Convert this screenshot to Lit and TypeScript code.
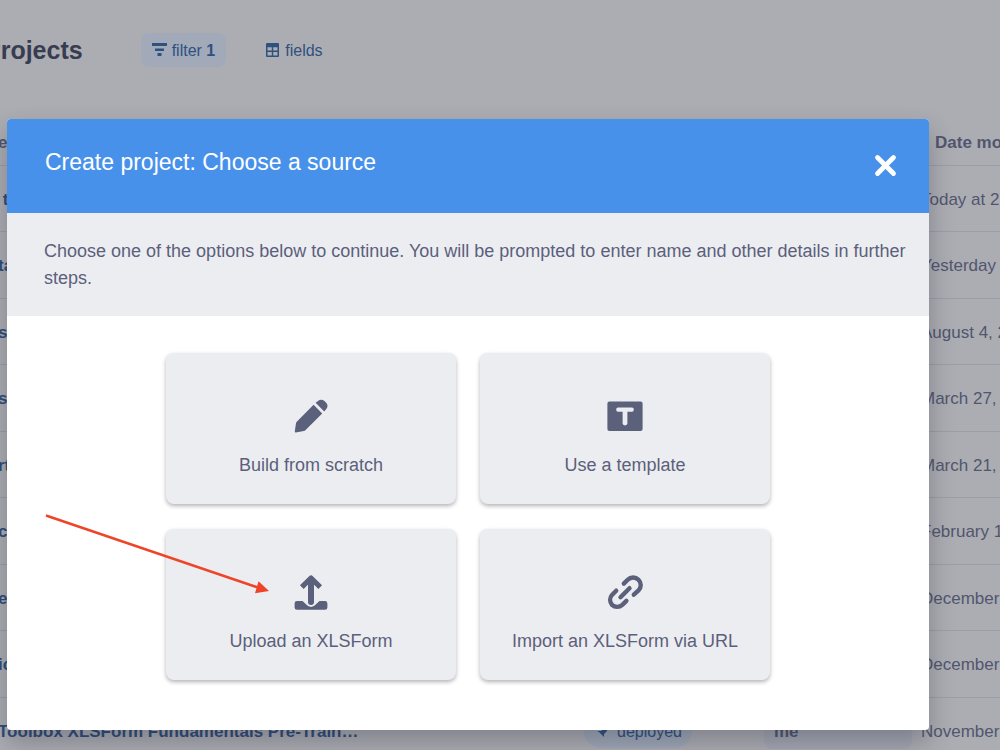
import { LitElement, html, css, svg, nothing } from "lit";
import { customElement } from "lit/decorators.js";

interface Row { name: string; date: string; status?: string; owner?: string; }

const ROWS: Row[] = [
  { name: "\u00a0t", date: "Today at 2:14 PM" },
  { name: "ta", date: "Yesterday at 4:05 PM" },
  { name: "s", date: "August 4, 2023" },
  { name: "s", date: "March 27, 2023" },
  { name: "rt", date: "March 21, 2023" },
  { name: "ce", date: "February 1, 2023" },
  { name: "es", date: "December 9, 2022" },
  { name: "ic", date: "December 5, 2022" },
  { name: "Toolbox XLSForm Fundamentals Pre-Train…", date: "November 8, 2022", status: "deployed", owner: "me" },
];

const OPTIONS = [
  { label: "Build from scratch", icon: svg`<svg viewBox="0 0 40 40"><path d="M4.800 36.500Q3.600 36.500 3.800 35.200L5 27.200Q5.200 26.200 6 25.400L22.600 8.800 31.200 17.400 14.600 34Q13.800 34.800 12.800 35ZM24.600 6.800L27 4.900Q28.500 3.700 30.200 3.700 32 3.700 33.400 4.900L35.200 6.700Q36.500 8 36.500 9.800 36.500 11.500 35.300 13L33.200 15.400Z" fill="currentColor"/></svg>` },
  { label: "Use a template", icon: svg`<svg viewBox="0 0 40 40"><path fill-rule="evenodd" d="M4.500 5.500H35.500a2.100 2.100 0 0 1 2.100 2.100V33A2.100 2.100 0 0 1 35.500 35.100H4.500A2.100 2.100 0 0 1 2.400 33V7.600A2.100 2.100 0 0 1 4.500 5.500ZM13 11.400Q11.200 11.400 11.200 13.600T13 15.800H17.600V27.600Q17.600 29.400 20 29.400T22.400 27.600V15.800H27Q28.800 15.800 28.800 13.600T27 11.400Z" fill="currentColor"/></svg>` },
  { label: "Upload an XLSForm", icon: svg`<svg viewBox="0 0 40 40"><path d="M20 30V8" fill="none" stroke="currentColor" stroke-width="6" stroke-linecap="round"/><path d="M10.800 15.200L20 6 29.200 15.200" fill="none" stroke="currentColor" stroke-width="5.200" stroke-linejoin="round"/><path d="M6 29H11.500L15 32.200Q20 38 25 32.200L28.500 29H34Q36.400 29 36.400 31.400V35.400Q36.400 37.800 34 37.800H6Q3.600 37.800 3.600 35.400V31.400Q3.600 29 6 29Z" fill="currentColor"/></svg>` },
  { label: "Import an XLSForm via URL", icon: svg`<svg viewBox="0 0 40 40"><path d="M18.800 11.600L22.700 7.700A7.600 7.600 0 0 1 33.500 7.700 7.600 7.600 0 0 1 33.500 18.500L28.800 22.700M15.500 25.200L24.500 16.200M11.200 18.700L7 22.900A7.600 7.600 0 0 0 7 32.800 7.600 7.600 0 0 0 17.300 32.900L21.400 28.900" fill="none" stroke="currentColor" stroke-width="4.400" stroke-linecap="round"/></svg>` },
];

@customElement("app-root")
export class AppRoot extends LitElement {
  static styles = css`
    :host {
      display: block;
      position: relative;
      height: 100vh;
      overflow: hidden;
      background: #acadb2;
      color: #5b607b;
      font: 17px/27px "Liberation Sans", Arial, sans-serif;
    }
    * { box-sizing: border-box; }
    button { font: inherit; color: inherit; border: 0; margin: 0; cursor: pointer; background: none; }
    svg { display: block; }
    .toolbar { display: flex; align-items: center; gap: 28px; height: 100px; margin-left: -16px; }
    .heading { margin: 0 30px 0 0; font-size: 25px; line-height: 32px; color: #373c50; }
    .tool { display: flex; align-items: center; gap: 4px; height: 34px; padding: 0 11px; border-radius: 8px; font-size: 16px; color: #2f517f; }
    .tool.active { background: #a2aab9; }
    .tool svg { width: 16px; height: 16px; }
    .list { width: calc(100% + 125px); margin: 19px 0 0 -2px; table-layout: fixed; border-collapse: collapse; text-align: left; white-space: nowrap; color: #51566f; }
    .list th, .list td { padding: 2px 0 0; border-bottom: 1px solid #9b9da7; }
    .list thead tr { height: 46px; }
    .list tbody tr { height: 66px; }
    .list tbody tr:nth-child(even) { height: 67px; }
    .list tbody th { color: #2f4c78; }
    .col-status { width: 180px; }
    .col-owner { width: 157px; }
    .col-date { width: 202px; }
    .list .date-head { padding-left: 14px; }
    .status { display: inline-flex; align-items: center; gap: 8px; height: 34px; padding: 0 10px 0 12px; border-radius: 17px; background: #a0a9b8; color: #2f517f; font-size: 16px; }
    .status svg { width: 13px; height: 13px; }
    .owner { display: block; padding: 4px 10px; margin-right: 9px; border-radius: 8px; background: #a5a8b2; font-weight: bold; }
    .overlay { position: absolute; inset: 0; padding: 119px 71px 20px 7px; }
    .modal { display: flex; flex-direction: column; min-height: 100%; background: #fff; border-radius: 4px; overflow: hidden; }
    .shade { height: 100%; border-radius: 4px; box-shadow: 0 12px 24px rgba(30, 34, 52, 0.3); }
    .modal-head { display: flex; align-items: center; justify-content: space-between; height: 94px; padding: 0 32px 1px 38px; background: #4891eb; color: #fff; }
    .title { margin: 0 0 7px; font-size: 23px; line-height: 30px; font-weight: normal; }
    .close { padding: 0; }
    .close svg { width: 23px; height: 23px; }
    .intro { margin: 0; padding: 25px 12px 24px 37px; background: #ecedf1; font-size: 18px; }
    .options { display: grid; grid-template-columns: repeat(2, 290px); gap: 25px 24px; justify-content: center; padding: 37px; }
    .option { display: flex; flex-direction: column; align-items: center; gap: 16px; height: 151px; padding: 43px 8px 0; border-radius: 8px; background: #ecedf1; box-shadow: 0 2px 4px rgba(0, 0, 0, 0.3); font-size: 18px; }
    .option svg { width: 40px; height: 40px; }
    .pointer { position: absolute; left: 40px; top: 505px; width: 240px; height: 100px; pointer-events: none; }
  `;

  render() {
    return html`
      <header class="toolbar">
        <h1 class="heading">Projects</h1>
        <button class="tool active">
          <svg viewBox="0 0 16 16"><path d="M0 1h15v3H0zM3 6.500h9v2.500H3zM5.500 11h4V14H5.500z" fill="currentColor"/></svg>
          <span>filter <b>1</b></span>
        </button>
        <button class="tool">
          <svg viewBox="0 0 16 16"><path fill-rule="evenodd" d="M2 1h11q1 0 1 1v12q0 1-1 1H2q-1 0-1-1V2q0-1 1-1zM2.500 5.200v3.200h4.300V5.200zM8.200 5.200v3.200h4.300V5.200zM2.500 10v3.400h4.300V10zM8.200 10v3.400h4.300V10z" fill="currentColor"/></svg>
          <span>fields</span>
        </button>
      </header>
      <table class="list">
        <colgroup><col /><col class="col-status" /><col class="col-owner" /><col class="col-date" /></colgroup>
        <thead>
          <tr><th>ec</th><th></th><th></th><th class="date-head">Date modified</th></tr>
        </thead>
        <tbody>
          ${ROWS.map((r) => html`
            <tr>
              <th scope="row">${r.name}</th>
              <td>${r.status ? html`<span class="status"><svg viewBox="0 0 13 13"><path d="M1 6h4l3-3 4-1-1 4-3 3v3l-2-2-3-3z" fill="currentColor"/></svg>${r.status}</span>` : nothing}</td>
              <td>${r.owner ? html`<span class="owner">${r.owner}</span>` : nothing}</td>
              <td>${r.date}</td>
            </tr>`)}
        </tbody>
      </table>
      <div class="overlay">
        <div class="shade">
          <section class="modal" role="dialog" aria-labelledby="title">
            <header class="modal-head">
              <h2 class="title" id="title">Create project: Choose a source</h2>
              <button class="close" aria-label="Close">
                <svg viewBox="0 0 23 23"><path d="M3.500 3.500l16 16M19.500 3.500l-16 16" stroke="currentColor" stroke-width="4.800" stroke-linecap="round"/></svg>
              </button>
            </header>
            <p class="intro">Choose one of the options below to continue. You will be prompted to enter name and other details in further steps.</p>
            <div class="options">
              ${OPTIONS.map((o) => html`<button class="option">${o.icon}<span>${o.label}</span></button>`)}
            </div>
          </section>
        </div>
      </div>
      <svg class="pointer" viewBox="0 0 240 100" aria-hidden="true">
        <path d="M6 10.500L218 82.500" stroke="#ee4528" stroke-width="2.500"/>
        <path d="M229 86L218.500 76.300 215 88.200z" fill="#ee4528"/>
      </svg>
    `;
  }
}
